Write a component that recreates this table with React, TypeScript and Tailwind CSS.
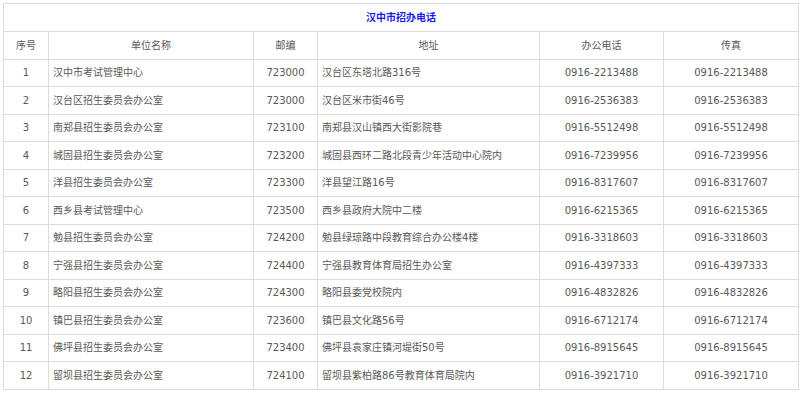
const rows = [
  ["1", "汉中市考试管理中心", "723000", "汉台区东塔北路316号", "0916-2213488", "0916-2213488"],
  ["2", "汉台区招生委员会办公室", "723000", "汉台区米市街46号", "0916-2536383", "0916-2536383"],
  ["3", "南郑县招生委员会办公室", "723100", "南郑县汉山镇西大街影院巷", "0916-5512498", "0916-5512498"],
  ["4", "城固县招生委员会办公室", "723200", "城固县西环二路北段青少年活动中心院内", "0916-7239956", "0916-7239956"],
  ["5", "洋县招生委员会办公室", "723300", "洋县望江路16号", "0916-8317607", "0916-8317607"],
  ["6", "西乡县考试管理中心", "723500", "西乡县政府大院中二楼", "0916-6215365", "0916-6215365"],
  ["7", "勉县招生委员会办公室", "724200", "勉县绿琼路中段教育综合办公楼4楼", "0916-3318603", "0916-3318603"],
  ["8", "宁强县招生委员会办公室", "724400", "宁强县教育体育局招生办公室", "0916-4397333", "0916-4397333"],
  ["9", "略阳县招生委员会办公室", "724300", "略阳县委党校院内", "0916-4832826", "0916-4832826"],
  ["10", "镇巴县招生委员会办公室", "723600", "镇巴县文化路56号", "0916-6712174", "0916-6712174"],
  ["11", "佛坪县招生委员会办公室", "723400", "佛坪县袁家庄镇河堤街50号", "0916-8915645", "0916-8915645"],
  ["12", "留坝县招生委员会办公室", "724100", "留坝县紫柏路86号教育体育局院内", "0916-3921710", "0916-3921710"],
];

const cell = "border border-[#dcdcdc] px-[4px] whitespace-nowrap";

export default function App() {
  return (
    <div className="w-[800px] h-[393px] bg-white pt-[3px] pl-[3px] font-['DejaVu_Sans','Noto_Sans_CJK_SC',sans-serif] text-[10px] text-[#595959]">
      <table className="border-collapse table-fixed w-[795px]">
        <colgroup>
          <col className="w-[45px]" />
          <col className="w-[205px]" />
          <col className="w-[64px]" />
          <col className="w-[222px]" />
          <col className="w-[124px]" />
          <col className="w-[135px]" />
        </colgroup>
        <tbody>
          <tr className="h-[28px]">
            <td colSpan={6} className={`${cell} text-center font-bold text-[#1c1ce6]`}>
              汉中市招办电话
            </td>
          </tr>
          <tr className="h-[27.5px]">
            <td className={`${cell} text-center`}>序号</td>
            <td className={`${cell} text-center`}>单位名称</td>
            <td className={`${cell} text-center`}>邮编</td>
            <td className={`${cell} text-center`}>地址</td>
            <td className={`${cell} text-center`}>办公电话</td>
            <td className={`${cell} text-center`}>传真</td>
          </tr>
          {rows.map((r) => (
            <tr key={r[0]} className="h-[27.5px]">
              <td className={`${cell} text-center`}>{r[0]}</td>
              <td className={`${cell} text-left`}>{r[1]}</td>
              <td className={`${cell} text-center`}>{r[2]}</td>
              <td className={`${cell} text-left`}>{r[3]}</td>
              <td className={`${cell} text-center`}>{r[4]}</td>
              <td className={`${cell} text-center`}>{r[5]}</td>
            </tr>
          ))}
        </tbody>
      </table>
    </div>
  );
}
